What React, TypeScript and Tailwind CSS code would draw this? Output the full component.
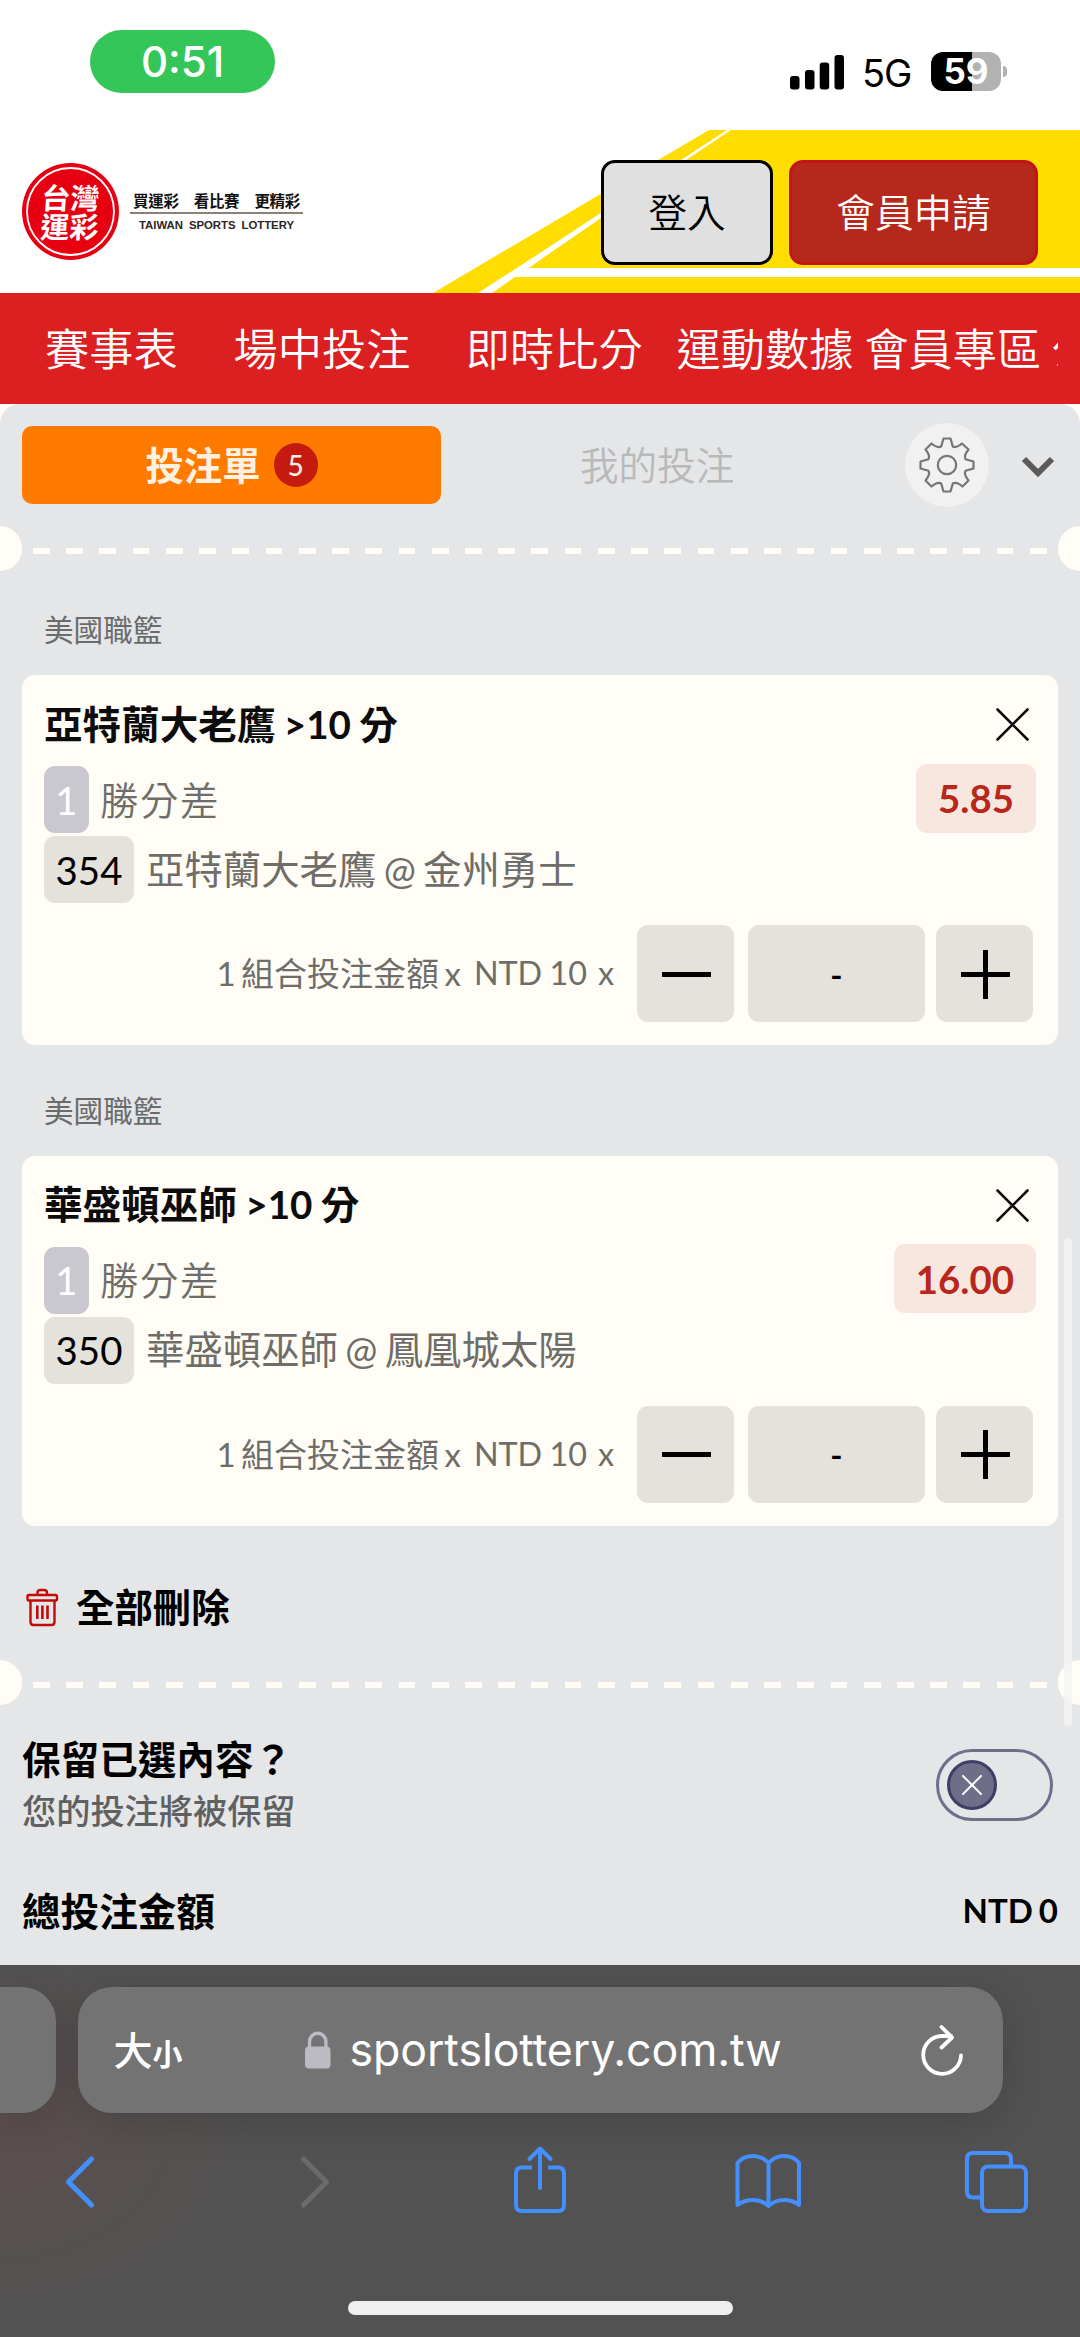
import type { ReactNode } from 'react'

type Bet = {
  id: string
  title: string
  market: string
  match: string
  odds: string
}

const BETS: Bet[] = [
  { id: '354', title: '亞特蘭大老鷹 >10 分', market: '勝分差', match: '亞特蘭大老鷹 @ 金州勇士', odds: '5.85' },
  { id: '350', title: '華盛頓巫師 >10 分', market: '勝分差', match: '華盛頓巫師 @ 鳳凰城太陽', odds: '16.00' },
]

function StatusBar() {
  return (
    <div className="flex h-[130px] shrink-0 justify-between bg-white pl-[90px] pr-[73px] font-['Inter',sans-serif]">
      <div className="mt-[30px] flex h-[63px] w-[185px] items-center justify-center rounded-full bg-[#35c659] text-[42px] font-medium leading-none text-white">
        0:51
      </div>
      <div className="mt-[52px] flex h-[39px] items-center">
        <svg width="55" height="36" viewBox="0 0 55 36" className="mr-[17px]">
          <rect x="0" y="22" width="9.5" height="13.5" rx="3" />
          <rect x="15" y="16" width="9.5" height="19.5" rx="3" />
          <rect x="29.7" y="8.5" width="9.5" height="27" rx="3" />
          <rect x="44.5" y="1" width="9.5" height="34.5" rx="3" />
        </svg>
        <span className="mr-[18px] mt-[2px] w-[51px] text-[38px] leading-none tracking-[-1px]">5G</span>
        <div className="flex h-[39px] w-[70px] items-center justify-center rounded-[12px] bg-[linear-gradient(90deg,#000_58.5%,#b2b2b2_58.5%)] text-[35px] font-bold leading-none text-white">
          59
        </div>
        <div className="ml-[2px] h-[11px] w-[4px] rounded-r-full bg-[#b2b2b2]" />
      </div>
    </div>
  )
}

function Logo() {
  return (
    <div className="flex items-center">
      <svg width="97" height="97" viewBox="0 0 97 97">
        <circle cx="48.5" cy="48.5" r="48.5" fill="#e60012" />
        <circle cx="48.5" cy="48.5" r="43.5" fill="none" stroke="#fff" strokeWidth="1.8" />
        <g fill="#fff" fontSize="29" fontWeight="700" fontFamily="'Noto Sans CJK TC', sans-serif" transform="skewX(-4)">
          <text x="22" y="46.5">台灣</text>
          <text x="23" y="75.5">運彩</text>
        </g>
      </svg>
      <div className="ml-[11px] flex w-[173px] flex-col items-center">
        <div className="flex w-[167px] justify-between text-[15.5px] font-bold leading-[20px] tracking-[-0.3px] text-[#111]">
          <span>買運彩</span>
          <span>看比賽</span>
          <span>更精彩</span>
        </div>
        <div className="mt-[1px] h-[2px] w-full bg-[#8b8178]" />
        <div className="mt-[4px] whitespace-nowrap font-['Liberation_Sans',sans-serif] text-[11.4px] font-bold leading-[14px] tracking-[-0.05px] text-[#2e2624] [word-spacing:3px]">
          TAIWAN SPORTS LOTTERY
        </div>
      </div>
    </div>
  )
}

function Header() {
  return (
    <header className="relative flex h-[163px] shrink-0 items-start bg-white pl-[22px] pr-[42px]">
      <svg width="1080" height="163" viewBox="0 130 1080 163" className="absolute left-0 top-0">
        <path d="M709 130H1080V293H433Z" fill="#ffdd00" />
        <path d="M727 130L684 158L540 253L478 293H492L515 277H1080V268H529L540 260L601 218L689 158L731 130Z" fill="#fff" />
      </svg>
      <div className="relative mt-[33px]">
        <Logo />
      </div>
      <button className="relative ml-auto mt-[30px] h-[105px] w-[172px] rounded-[14px] border-[3px] border-black bg-[#e0e0e0] text-[38.6px] font-[350] leading-none">
        登入
      </button>
      <button className="relative ml-[16px] mt-[30px] h-[105px] w-[249px] rounded-[14px] border-[3px] border-[#c11616] bg-[#b6281b] text-[38.6px] font-[350] leading-none text-white">
        會員申請
      </button>
    </header>
  )
}

function Nav() {
  return (
    <nav className="h-[111px] shrink-0 bg-[#dc1f20] pl-[45px] pr-[22px]">
      <div className="flex h-full items-center overflow-hidden whitespace-nowrap pt-[2px] text-[44.2px] font-[350] leading-none text-white">
        <span className="mr-[56px]">賽事表</span>
        <span className="mr-[55.5px]">場中投注</span>
        <span className="mr-[34px]">即時比分</span>
        <span className="mr-[11px]">運動數據</span>
        <span className="mr-[10px]">會員專區</span>
        <span>公告</span>
      </div>
    </nav>
  )
}

function GearIcon() {
  return (
    <svg width="56" height="56" viewBox="-28 -28 56 56" fill="none" stroke="#757575" strokeWidth="2.2" strokeLinejoin="round">
      <circle r="9.2" />
      <path d="M-3.5 -26.5H3.5L5.8 -18.5Q9 -16.5 15 -21.5L21.5 -15.5Q16.5 -9.5 18.5 -5.8L26.5 -3.5V3.5L18.5 5.8Q16.5 9.5 21.5 15.5L15.5 21.5Q9.5 16.5 5.8 18.5L3.5 26.5H-3.5L-5.8 18.5Q-9.5 16.5 -15.5 21.5L-21.5 15.5Q-16.5 9.5 -18.5 5.8L-26.5 3.5V-3.5L-18.5 -5.8Q-16.5 -9.5 -21.5 -15.5L-15.5 -21.5Q-9.5 -16.5 -5.8 -18.5Z" />
    </svg>
  )
}

function Tabs() {
  return (
    <div className="flex h-[84px] items-center pl-[22px]">
      <div className="flex h-[78px] w-[419px] items-center justify-center rounded-[10px] bg-[#ff7b00] text-[38.4px] font-bold leading-none text-[#fff1e2]">
        投注單
        <span className="ml-[13px] flex h-[44px] w-[44px] items-center justify-center rounded-full bg-[#c41a10] text-[28px] font-medium">5</span>
      </div>
      <span className="ml-[139px] w-[325px] text-[38.6px] font-[350] leading-none text-[#b8b9ba]">我的投注</span>
      <div className="flex h-[84px] w-[84px] items-center justify-center rounded-full bg-[#f1f1f1]">
        <GearIcon />
      </div>
      <svg width="34" height="22" viewBox="0 0 34 22" className="ml-[32px] mt-[3px]">
        <path d="M3 3L17 17L31 3" fill="none" stroke="#5a5a5a" strokeWidth="6" />
      </svg>
    </div>
  )
}

function Divider() {
  return (
    <div className="flex h-[45px] items-center justify-between">
      <div className="h-[45px] w-[22px] rounded-r-full bg-[#fffdf5]" />
      <div className="mt-[5px] h-[6px] w-[1014px] bg-[repeating-linear-gradient(90deg,#fffdf5_0_16.8px,transparent_16.8px_33.23px)]" />
      <div className="h-[45px] w-[22px] rounded-l-full bg-[#fffdf5]" />
    </div>
  )
}

function Step({ children }: { children: ReactNode }) {
  return (
    <button className="flex h-[97px] w-[97px] items-center justify-center rounded-[11px] bg-[#e5e2db] pl-[2px] pt-[1px]">
      <svg width="49" height="49" viewBox="0 0 49 49" stroke="#000" strokeWidth="5">
        {children}
      </svg>
    </button>
  )
}

function BetCard({ bet }: { bet: Bet }) {
  return (
    <>
      <div className="h-[110.5px] pl-[44px] pt-[47.5px] text-[29.6px] leading-[36px] text-[#6a6b6c]">美國職籃</div>
      <div className="mx-[22px] flex h-[370px] flex-col rounded-[13px] bg-[#fffdf5] pl-[22px] text-[38.4px] leading-[50px] text-[#6e6d69]">
        <div className="flex h-[88px] items-center justify-between pr-[29px] pt-[11px]">
          <span className="-mt-[2px] text-[38.6px] font-bold text-[#0c0c0c] [word-spacing:-1px]">{bet.title}</span>
          <svg width="33" height="33" viewBox="0 0 33 33">
            <path d="M1.5 1.5L31.5 31.5M31.5 1.5L1.5 31.5" stroke="#0c0c0c" strokeWidth="2.6" strokeLinecap="round" />
          </svg>
        </div>
        <div className="flex h-[73px] items-center justify-between pr-[22px]">
          <div className="flex items-center">
            <span className="flex h-[67px] w-[45px] items-center justify-center rounded-[11px] bg-[#c9c8ce] text-white">1</span>
            <span className="ml-[11px] font-[350] tracking-[1.6px]">{bet.market}</span>
          </div>
          <span className="-mt-[3px] flex h-[69px] items-center rounded-[11px] bg-[#f8e7df] px-[22px] font-bold text-[#b8271b]">{bet.odds}</span>
        </div>
        <div className="flex h-[67px] items-center">
          <span className="flex h-[67px] w-[90px] items-center justify-center rounded-[11px] bg-[#e5e2db] text-black">{bet.id}</span>
          <span className="-mt-[2px] ml-[12px] [word-spacing:-2.5px]">{bet.match}</span>
        </div>
        <div className="mt-[22px] flex items-center justify-end pr-[25px]">
          <span className="-mt-[1px] mr-[23px] flex text-[33px] [word-spacing:-3px]">
            1 組合投注金額 x<span className="ml-[13px] text-[32.3px] [word-spacing:-1px]">NTD 10</span><span className="ml-[11px] text-[32.3px]">x</span>
          </span>
          <Step>
            <path d="M0 24.5H49" />
          </Step>
          <div className="ml-[14px] mr-[11px] flex h-[97px] w-[177px] items-center justify-center rounded-[11px] bg-[#e5e2db] text-[33px] font-bold text-black">-</div>
          <Step>
            <path d="M0 24.5H49M24.5 0V49" />
          </Step>
        </div>
      </div>
    </>
  )
}

function TrashIcon() {
  return (
    <svg width="33" height="39" viewBox="0 0 33 39" fill="none" stroke="#c10a0a" strokeWidth="2.4">
      <rect x="1.5" y="7" width="29.5" height="5.5" rx="1.5" />
      <path d="M11.5 7V5Q11.5 2 14.5 2H18Q21 2 21 5V7M4.5 12.5V34Q4.5 37 7.5 37H25.5Q28.5 37 28.5 34V12.5" />
      <path d="M11.3 17.5V31M16.4 17.5V31M21.5 17.5V31" strokeWidth="2.6" />
    </svg>
  )
}

function BetSlip() {
  return (
    <main className="relative h-[1561px] shrink-0 overflow-hidden bg-[#fffdf5]">
      <div className="h-full rounded-t-[20px] bg-[#e4e6e8] pt-[19px]">
        <Tabs />
        <div className="mt-[19px]">
          <Divider />
        </div>
        <div className="-mt-[6.5px]">
          {BETS.map((bet) => (
            <BetCard key={bet.id} bet={bet} />
          ))}
        </div>
        <div className="mt-[60px] flex h-[44px] items-center pl-[26px] text-[38.4px] font-bold leading-[44px] text-black">
          <TrashIcon />
          <span className="-mt-[2px] ml-[17px]">全部刪除</span>
        </div>
        <div className="mt-[30.5px]">
          <Divider />
        </div>
        <div className="mt-[29px] flex items-center justify-between pl-[22px] pr-[27px]">
          <div>
            <div className="text-[38.6px] font-bold leading-[50px] text-black">保留已選內容？</div>
            <div className="mt-[5px] text-[34.2px] font-medium leading-[44px] text-[#5f6062]">您的投注將被保留</div>
          </div>
          <div className="mt-[2px] h-[72px] w-[117px] rounded-full border-[3px] border-[#716e8c] p-[8px]">
            <div className="flex h-[50px] w-[50px] items-center justify-center rounded-full border-[3px] border-[#403d66] bg-[#6f6e89]">
              <svg width="20" height="20" viewBox="0 0 20 20">
                <path d="M1 1L19 19M19 1L1 19" stroke="#fff" strokeWidth="2" strokeLinecap="round" />
              </svg>
            </div>
          </div>
        </div>
        <div className="mt-[53px] flex h-[50px] items-center justify-between px-[22px] text-[38.6px] font-bold leading-[50px] text-black">
          <span>總投注金額</span>
          <span className="-mt-[3px] text-[33px] [word-spacing:-2px]">NTD 0</span>
        </div>
      </div>
      <div className="absolute right-[8px] top-[834px] h-[488px] w-[8px] rounded-full bg-[#f4f4f4]/80" />
    </main>
  )
}

function BrowserBar() {
  return (
    <footer className="flex h-[372px] shrink-0 flex-col items-center bg-[radial-gradient(ellipse_260px_190px_at_0_170px,#5c4e4e,#525252)] pt-[22px]">
      <div className="flex h-[126px] w-full text-white">
        <div className="w-[55.5px] rounded-r-[34px] bg-[#757474] shadow-[0_8px_40px_rgba(0,0,0,0.16)]" />
        <div className="ml-[22px] flex w-[925px] items-center rounded-[34px] bg-[#737373] pl-[36px] shadow-[0_8px_40px_rgba(0,0,0,0.16)]">
          <span className="flex w-[191px] shrink-0 items-baseline font-medium leading-none">
            <span className="text-[39px]">大</span>
            <span className="text-[30px] font-bold">小</span>
          </span>
          <svg width="26" height="38" viewBox="0 0 26 38">
            <rect x="0" y="15.5" width="25.5" height="22" rx="4" fill="#bcbac2" />
            <path d="M4.5 17V10.5a8.2 8.2 0 0 1 16.4 0V17" fill="none" stroke="#bcbac2" strokeWidth="3.4" />
          </svg>
          <span className="ml-[19px] w-[570px] shrink-0 font-['Inter',sans-serif] text-[44.7px] leading-none tracking-[-0.1px]">sportslottery.com.tw</span>
          <svg width="44" height="54" viewBox="919 2021 44 54" fill="none" stroke="#fff" strokeWidth="3.8" strokeLinecap="round" strokeLinejoin="round">
            <path d="M960 2053.5A18.9 18.9 0 1 1 941 2034H950" />
            <path d="M940.5 2025L951 2035.5L940.5 2045.5" />
          </svg>
        </div>
      </div>
      <svg width="1080" height="80" viewBox="0 2140 1080 80" className="mt-[27px]" fill="none" stroke="#448ffe" strokeWidth="4" strokeLinecap="round" strokeLinejoin="round">
        <path d="M91.5 2159L68.5 2182L91.5 2205" strokeWidth="5" />
        <path d="M303.5 2159L326.5 2182L303.5 2205" strokeWidth="5" stroke="#6b6b6b" />
        <path d="M532 2167.5H522Q516 2167.5 516 2173.5V2205Q516 2211 522 2211H558Q564 2211 564 2205V2173.5Q564 2167.5 558 2167.5H548" strokeLinecap="butt" />
        <path d="M540 2188V2149M529.5 2159L540 2148.5L550.5 2159" />
        <path d="M768.5 2206V2163Q762 2156 753 2156Q743 2156 737.5 2163V2205Q744 2200 753 2200Q762 2200 768.5 2206Q775 2200 784 2200Q793 2200 799 2205V2163Q794 2156 784 2156Q775 2156 768.5 2163" />
        <path d="M980 2197.5H973Q967 2197.5 967 2191.5V2159Q967 2153 973 2153H1005Q1011 2153 1011 2159V2166" strokeLinecap="butt" />
        <rect x="982" y="2166.5" width="44" height="44.5" rx="6" />
      </svg>
      <div className="mt-[81px] h-[14px] w-[385px] rounded-full bg-[#efefef]" />
    </footer>
  )
}

export default function App() {
  return (
    <div className="flex h-[2337px] w-[1080px] flex-col overflow-hidden bg-white font-['Lato','Noto_Sans_CJK_TC',sans-serif]">
      <StatusBar />
      <Header />
      <Nav />
      <BetSlip />
      <BrowserBar />
    </div>
  )
}
